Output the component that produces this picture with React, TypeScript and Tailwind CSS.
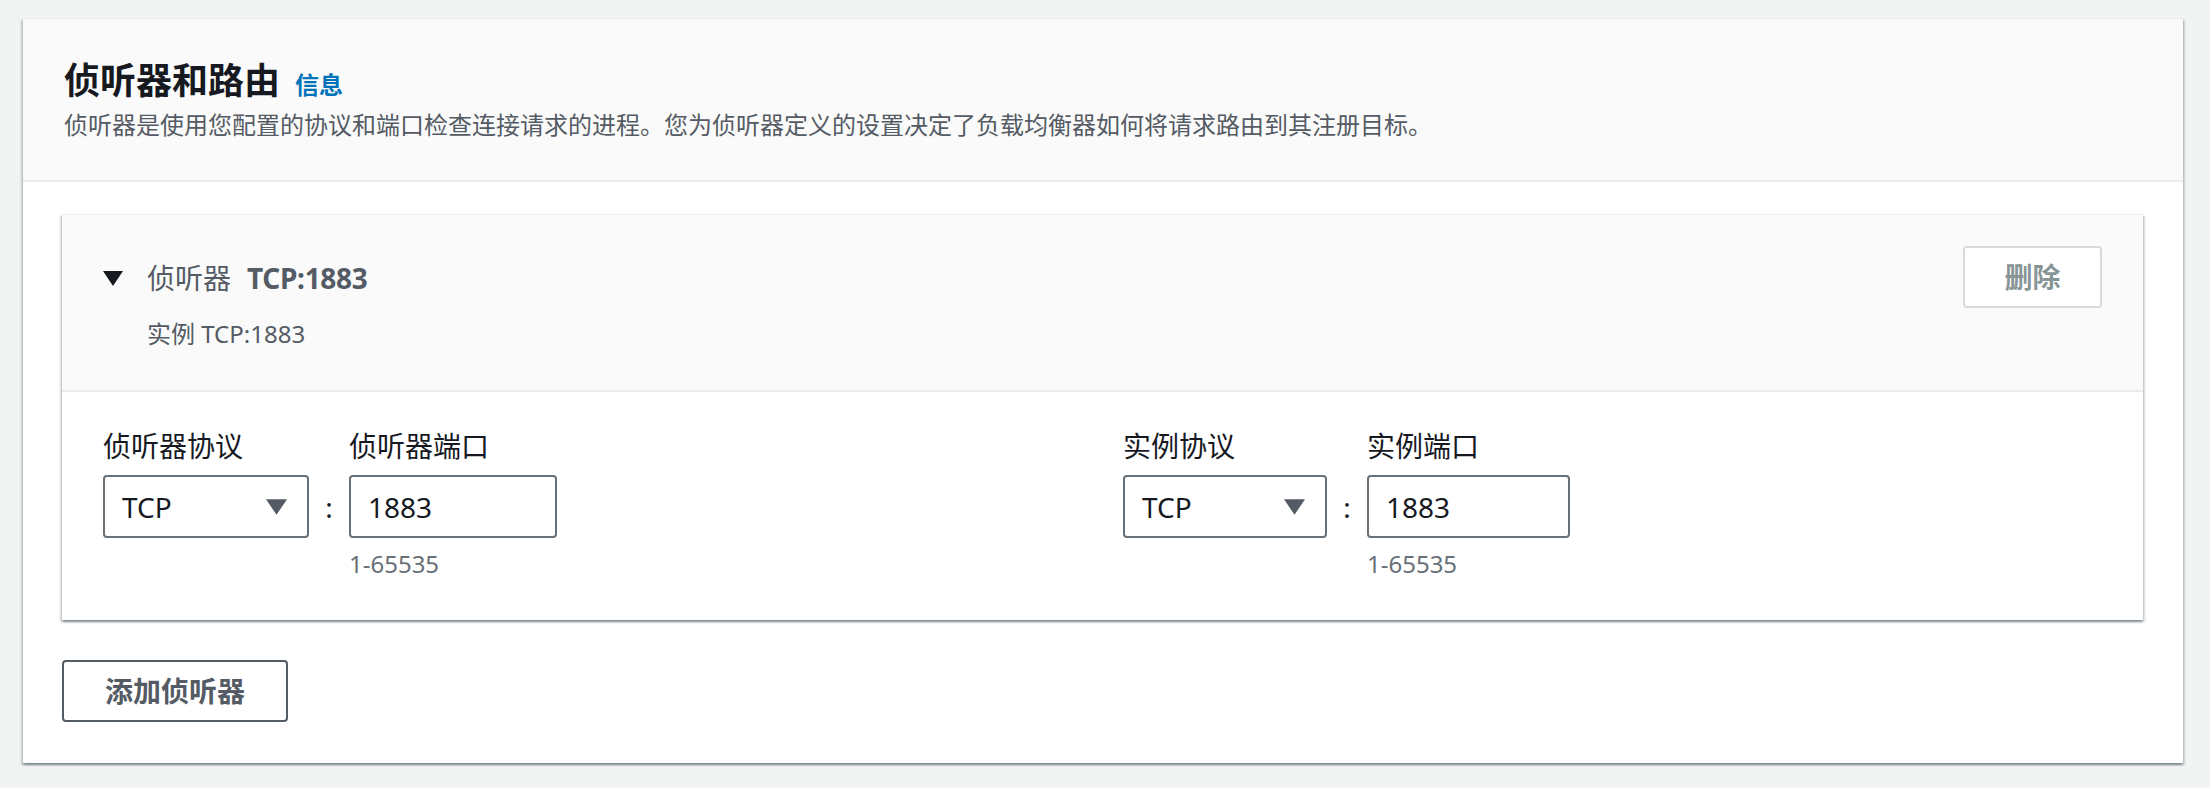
const cardShadow =
  'shadow-[0_2px_2px_0_rgba(0,28,36,0.3),2px_2px_2px_0_rgba(0,28,36,0.15),-2px_2px_2px_0_rgba(0,28,36,0.15)]';

function Caret({ className }: { className: string }) {
  return (
    <svg viewBox="0 0 20 15" className={className} aria-hidden>
      <polygon points="0,0 20,0 10,15" fill="currentColor" />
    </svg>
  );
}

function PortGroup({ protoLabel, portLabel, narrow }: { protoLabel: string; portLabel: string; narrow?: boolean }) {
  return (
    <div className="flex items-start">
      <div className="flex flex-col">
        <label className="text-[28px] leading-[40px] text-[#16191f]">{protoLabel}</label>
        <div
          className={`mt-[9px] flex h-[63px] items-center justify-between rounded-[4px] border-2 border-[#687078] bg-white pl-[17px] pr-[20px] ${
            narrow ? 'w-[204px]' : 'w-[206px]'
          }`}
        >
          <span className="text-[28px] text-[#16191f]">TCP</span>
          <Caret className="h-[16px] w-[21px] text-[#545b64]" />
        </div>
      </div>
      <div className="mt-[49px] flex h-[63px] w-[40px] items-center justify-center text-[28px] text-[#16191f]">:</div>
      <div className="flex flex-col">
        <label className="text-[28px] leading-[40px] text-[#16191f]">{portLabel}</label>
        <div
          className={`mt-[9px] flex h-[63px] items-center rounded-[4px] border-2 border-[#687078] bg-white pl-[17px] ${
            narrow ? 'w-[203px]' : 'w-[208px]'
          }`}
        >
          <span className="text-[28px] text-[#16191f]">1883</span>
        </div>
        <div className="mt-[10px] text-[24px] leading-[32px] text-[#687078]">1-65535</div>
      </div>
    </div>
  );
}

export default function App() {
  return (
    <div className="min-h-screen bg-[#f2f3f3] pl-[23px] pr-[27px] pt-[18px] font-['Noto_Sans','Noto_Sans_CJK_SC',sans-serif]">
      <div className={`border-t border-[#eaeded] bg-white ${cardShadow}`}>
        {/* section header */}
        <div className="border-b-2 border-[#eaeded] bg-[#fafafa] px-[41px] pb-[39px] pt-[40px]">
          <div className="flex items-baseline gap-[15px]">
            <h2 className="text-[36px] font-bold leading-[44px] text-[#16191f]">侦听器和路由</h2>
            <a className="text-[24px] font-bold text-[#0073bb]">信息</a>
          </div>
          <p className="mt-[6px] text-[24px] leading-[32px] text-[#545b64]">
            侦听器是使用您配置的协议和端口检查连接请求的进程。您为侦听器定义的设置决定了负载均衡器如何将请求路由到其注册目标。
          </p>
        </div>

        <div className="pb-[41px] pl-[39px] pr-[40px] pt-[32px]">
          {/* listener card */}
          <div className={`border-t border-[#eaeded] bg-white ${cardShadow}`}>
            <div className="flex items-start justify-between border-b-2 border-[#eaeded] bg-[#fafafa] pb-[40px] pl-[41px] pr-[41px] pt-[31px]">
              <div className="mt-[12px]">
                <div className="flex items-center">
                  <Caret className="h-[15px] w-[20px] text-[#16191f]" />
                  <span className="ml-[24px] text-[28px] leading-[40px] text-[#545b64]">侦听器</span>
                  <span className="ml-[16px] text-[28px] font-bold leading-[40px] tracking-[-0.3px] text-[#545b64]">TCP:1883</span>
                </div>
                <div className="mt-[20px] pl-[44px] text-[24px] leading-[32px] text-[#545b64]">实例 TCP:1883</div>
              </div>
              <button className="h-[62px] w-[139px] rounded-[4px] border-2 border-[#d5dbdb] bg-white text-[28px] font-bold text-[#879596]">
                删除
              </button>
            </div>
            <div className="grid grid-cols-2 gap-x-[40px] pb-[40px] pl-[41px] pr-[40px] pt-[34px]">
              <PortGroup protoLabel="侦听器协议" portLabel="侦听器端口" />
              <PortGroup protoLabel="实例协议" portLabel="实例端口" narrow />
            </div>
          </div>

          <button className="mt-[40px] h-[62px] w-[226px] rounded-[4px] border-2 border-[#545b64] bg-white text-[28px] font-bold text-[#545b64]">
            添加侦听器
          </button>
        </div>
      </div>
    </div>
  );
}
